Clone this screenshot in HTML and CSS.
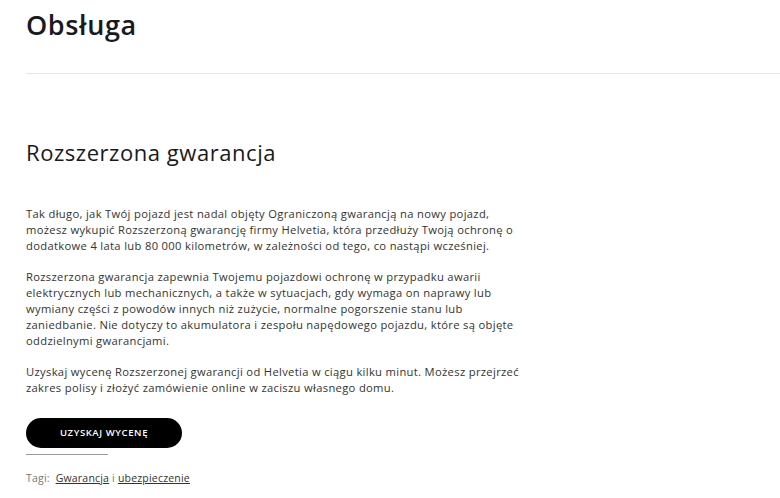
FILE: index.html
```html
<!DOCTYPE html>
<html lang="pl">
<head>
<meta charset="utf-8">
<link rel="stylesheet" href="styles.css">
</head>
<body>
<div class="page">
  <header class="top">
    <h1 class="brand">Obsługa</h1>
    <nav class="nav"><span>Forum</span></nav>
  </header>
  <main class="content">
    <h2 class="title">Rozszerzona gwarancja</h2>
    <p class="para">Tak długo, jak Twój pojazd jest nadal objęty Ograniczoną gwarancją na nowy pojazd, możesz wykupić Rozszerzoną gwarancję firmy Helvetia, która przedłuży Twoją ochronę o dodatkowe 4 lata lub 80 000 kilometrów, w zależności od tego, co nastąpi wcześniej.</p>
    <p class="para">Rozszerzona gwarancja zapewnia Twojemu pojazdowi ochronę w przypadku awarii elektrycznych lub mechanicznych, a także w sytuacjach, gdy wymaga on naprawy lub wymiany części z powodów innych niż zużycie, normalne pogorszenie stanu lub zaniedbanie. Nie dotyczy to akumulatora i zespołu napędowego pojazdu, które są objęte oddzielnymi gwarancjami.</p>
    <p class="para">Uzyskaj wycenę Rozszerzonej gwarancji od Helvetia w ciągu kilku minut. Możesz przejrzeć zakres polisy i złożyć zamówienie online w zaciszu własnego domu.</p>
    <a class="btn" href="#">UZYSKAJ WYCENĘ</a>
    <div class="rule"></div>
    <div class="tags">Tagi: <a class="tag tag-first" href="#">Gwarancja</a> i <a class="tag" href="#">ubezpieczenie</a></div>
  </main>
</div>
</body>
</html>
```
FILE: styles.css
```css
html, body {
  margin: 0;
  padding: 0;
  background: #fff;
  overflow: hidden;
}
body {
  font-family: "Open Sans", "Liberation Sans", sans-serif;
  color: #222;
}
.page {
  padding-left: 26px;
  width: 754px;
  overflow: hidden;
}
.top {
  display: flex;
  justify-content: space-between;
  align-items: flex-start;
  height: 73px;
  border-bottom: 1px solid #e6e6e6;
  width: 800px;
}
.brand {
  margin: 6px 0 0;
  font-size: 27px;
  line-height: 38px;
  font-weight: 600;
  letter-spacing: 0.6px;
  color: #171a20;
}
.nav {
  margin: 31px 0 0;
  width: 46px;
  font-family: "Liberation Sans", Arial, sans-serif;
  font-size: 11px;
  color: #444;
}
.content {
  width: 500px;
  padding-top: 64px;
}
.title {
  margin: 0 0 40px;
  font-size: 22px;
  font-weight: 400;
  color: #171a20;
  line-height: 28px;
  letter-spacing: 0.55px;
}
.para {
  margin: 0 0 16px;
  font-size: 11.2px;
  line-height: 15.8px;
  letter-spacing: 0.33px;
  color: #333;
}
.btn {
  display: inline-flex;
  align-items: center;
  justify-content: center;
  width: 156px;
  height: 30px;
  margin-top: 6px;
  background: #000;
  color: #fff;
  border-radius: 15px;
  font-size: 9.5px;
  font-weight: 600;
  letter-spacing: 0.6px;
  text-decoration: none;
}
.rule {
  width: 82px;
  height: 1px;
  background: #999;
  margin-top: 6px;
}
.tags {
  margin-top: 16px;
  font-size: 10.5px;
  letter-spacing: 0.2px;
  color: #777;
}
.tag {
  color: #333;
  text-decoration: underline;
}
.tag-first {
  margin-left: 3px;
}
```
